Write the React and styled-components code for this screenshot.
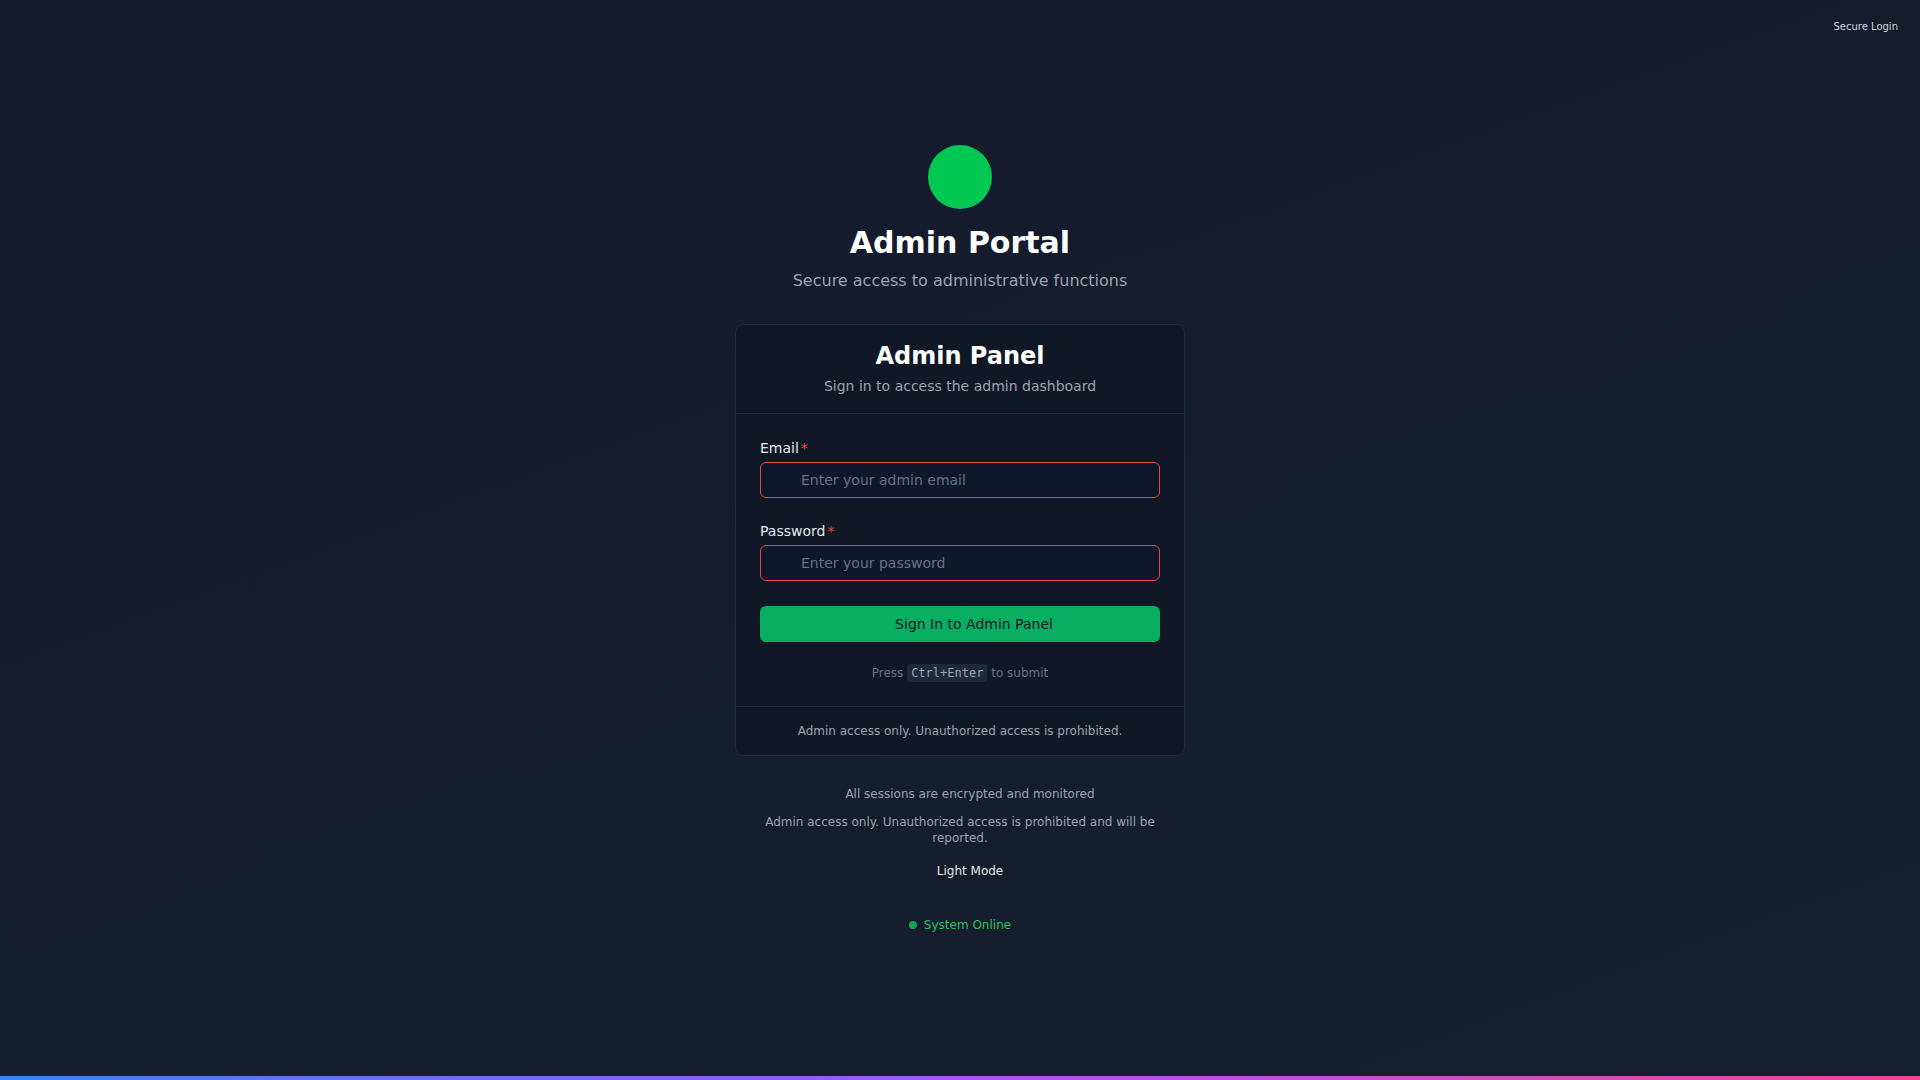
import React from "react";
import styled, { createGlobalStyle } from "styled-components";

const GlobalStyle = createGlobalStyle`
  * { box-sizing: border-box; }
  body {
    margin: 0;
    font-family: "DejaVu Sans", "Liberation Sans", sans-serif;
    background: #131b2c;
  }
`;

const Page = styled.div`
  position: relative;
  min-height: 100vh;
  padding-top: 145px;
  display: flex;
  flex-direction: column;
  align-items: center;
  background: linear-gradient(160deg, #121a2b 0%, #141c2d 50%, #161f30 100%);
`;

const Badge = styled.div`
  position: absolute;
  top: 21px;
  right: 22px;
  font-size: 10px;
  line-height: 12px;
  color: #d1d5db;
`;

const Logo = styled.div`
  width: 64px;
  height: 64px;
  border-radius: 50%;
  background: #00c853;
  margin-bottom: 16px;
`;

const Title = styled.h1`
  margin: 0;
  font-size: 30px;
  line-height: 36px;
  font-weight: 700;
  color: #ffffff;
`;

const Subtitle = styled.p`
  margin: 8px 0 31px;
  font-size: 16px;
  line-height: 24px;
  color: #9ca3af;
`;

const Card = styled.div`
  width: 450px;
  background: #101828;
  border: 1px solid #1f2937;
  border-radius: 8px;
`;

const CardHeader = styled.div`
  padding: 15px 24px 17px;
  text-align: center;
  border-bottom: 1px solid #1f2937;
`;

const CardTitle = styled.h2`
  margin: 0;
  font-size: 24px;
  line-height: 32px;
  font-weight: 700;
  color: #ffffff;
`;

const CardSub = styled.p`
  margin: 4px 0 0;
  font-size: 14px;
  line-height: 20px;
  color: #9ca3af;
`;

const CardBody = styled.form`
  padding: 24px;
  display: flex;
  flex-direction: column;
`;

const Field = styled.div`
  display: flex;
  flex-direction: column;
  gap: 4px;
  margin-bottom: ${(p) => p.$mb}px;
`;

const Label = styled.label`
  font-size: 14px;
  line-height: 20px;
  color: #e5e7eb;
`;

const Req = styled.span`
  color: #ef4444;
  margin-left: 2px;
`;

const InputWrap = styled.div`
  position: relative;
`;

const Input = styled.input`
  width: 100%;
  height: 36px;
  padding: 0 12px 0 40px;
  background: #0f172a;
  border: 1px solid #ef4444;
  border-radius: 6px;
  font-family: inherit;
  font-size: 14px;
  color: #e5e7eb;
  outline: none;
  &::placeholder { color: #64748b; }
`;

const Button = styled.button`
  height: 36px;
  width: 100%;
  display: flex;
  align-items: center;
  justify-content: center;
  border: none;
  border-radius: 6px;
  background: #0aae61;
  color: #0f172a;
  font-family: inherit;
  font-size: 14px;
  cursor: pointer;
`;

const Spacer = styled.span`
  display: inline-block;
  width: ${(p) => p.$w}px;
  margin-right: ${(p) => p.$gap}px;
`;

const Hint = styled.p`
  margin: 22px 0 0;
  text-align: center;
  font-size: 12px;
  line-height: 18px;
  color: #6b7280;
`;

const Kbd = styled.kbd`
  display: inline-block;
  padding: 1px 4px;
  background: #1e293b;
  border-radius: 3px;
  font-family: "DejaVu Sans Mono", "Liberation Mono", monospace;
  font-size: 12px;
  line-height: 16px;
  color: #9ca3af;
`;

const CardFooter = styled.div`
  padding: 16px 24px;
  border-top: 1px solid #1f2937;
  text-align: center;
  font-size: 12px;
  line-height: 16px;
  color: #9ca3af;
`;

const Notes = styled.div`
  width: 448px;
  padding: 0 24px;
  margin-top: 30px;
  display: flex;
  flex-direction: column;
  align-items: center;
  text-align: center;
`;

const Note = styled.p`
  margin: 0 0 ${(p) => p.$mb || 0}px;
  font-size: 12px;
  line-height: 16px;
  color: #9ca3af;
  display: flex;
  justify-content: center;
`;

const ModeToggle = styled.button`
  margin-top: 17px;
  padding: 0;
  background: none;
  border: none;
  font-family: inherit;
  font-size: 12px;
  line-height: 16px;
  color: #e5e7eb;
  display: flex;
  cursor: pointer;
`;

const Status = styled.div`
  margin-top: 38px;
  display: flex;
  align-items: center;
  gap: 7px;
  font-size: 12px;
  line-height: 16px;
  color: #22c55e;
`;

const Dot = styled.span`
  width: 8px;
  height: 8px;
  border-radius: 50%;
  background: #16a34a;
`;

const GradientBar = styled.div`
  position: fixed;
  left: 0;
  right: 0;
  bottom: 0;
  height: 4px;
  background: linear-gradient(90deg, #3b82f6 0%, #a855f7 50%, #ec4899 100%);
`;

export default function App() {
  return (
    <>
      <GlobalStyle />
      <Page>
        <Badge>Secure Login</Badge>
        <Logo />
        <Title>Admin Portal</Title>
        <Subtitle>Secure access to administrative functions</Subtitle>
        <Card>
          <CardHeader>
            <CardTitle>Admin Panel</CardTitle>
            <CardSub>Sign in to access the admin dashboard</CardSub>
          </CardHeader>
          <CardBody onSubmit={(e) => e.preventDefault()}>
            <Field $mb={23}>
              <Label htmlFor="email">
                Email<Req>*</Req>
              </Label>
              <InputWrap>
                <Input id="email" type="email" placeholder="Enter your admin email" />
              </InputWrap>
            </Field>
            <Field $mb={25}>
              <Label htmlFor="password">
                Password<Req>*</Req>
              </Label>
              <InputWrap>
                <Input id="password" type="password" placeholder="Enter your password" />
              </InputWrap>
            </Field>
            <Button type="submit">
              <Spacer $w={20} $gap={8} />
              Sign In to Admin Panel
            </Button>
            <Hint>
              Press <Kbd>Ctrl+Enter</Kbd> to submit
            </Hint>
          </CardBody>
          <CardFooter>Admin access only. Unauthorized access is prohibited.</CardFooter>
        </Card>
        <Notes>
          <Note $mb={12}>
            <Spacer $w={16} $gap={4} />
            All sessions are encrypted and monitored
          </Note>
          <Note>Admin access only. Unauthorized access is prohibited and will be reported.</Note>
          <ModeToggle type="button">
            <Spacer $w={16} $gap={4} />
            Light Mode
          </ModeToggle>
          <Status>
            <Dot />
            System Online
          </Status>
        </Notes>
        <GradientBar />
      </Page>
    </>
  );
}
